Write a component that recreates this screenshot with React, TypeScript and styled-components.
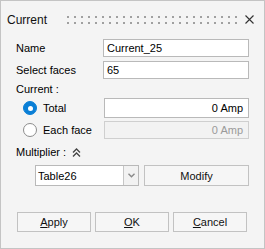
import React from 'react';
import styled, { createGlobalStyle } from 'styled-components';

/* -------------------------------------------------------------------------- */
/*                                  Globals                                   */
/* -------------------------------------------------------------------------- */

const GlobalStyle = createGlobalStyle`
  html, body {
    margin: 0;
    padding: 0;
    background: #f4f4f4;
  }
  body {
    font-family: "Liberation Sans", Arial, sans-serif;
    font-size: 11px;
    color: #000;
  }
  * { box-sizing: border-box; }
`;

/* -------------------------------------------------------------------------- */
/*                                  Component                                 */
/* -------------------------------------------------------------------------- */

const App = () => (
  <>
    <GlobalStyle />
    <Window>
      <TitleBar>
        <Title>Current</Title>
        <Grip />
        <CloseButton aria-label="Close">
          <svg width="9" height="9" viewBox="0 0 9 9">
            <path d="M0.5 0.5 L8.5 8.5 M8.5 0.5 L0.5 8.5" stroke="#333" strokeWidth="1.1" />
          </svg>
        </CloseButton>
      </TitleBar>

      <Body>
        {/* ------------------------------ fields ------------------------------ */}
        <FieldRow>
          <Label>Name</Label>
          <TextBox>Current_25</TextBox>
        </FieldRow>
        <FieldRow $top={4}>
          <Label>Select faces</Label>
          <TextBox>65</TextBox>
        </FieldRow>

        {/* ------------------------------ current ----------------------------- */}
        <SectionLabel $top={4}>Current :</SectionLabel>
        <RadioRow $top={2}>
          <Radio $checked />
          <RadioText>Total</RadioText>
          <TextBox $height={20} $align="right">0 Amp</TextBox>
        </RadioRow>
        <RadioRow $top={3}>
          <Radio />
          <RadioText>Each face</RadioText>
          <TextBox $height={18} $align="right" $disabled>0 Amp</TextBox>
        </RadioRow>

        {/* ----------------------------- multiplier --------------------------- */}
        <SectionLabel $top={7}>
          Multiplier :
          <svg width="9" height="9" viewBox="0 0 9 9">
            <path d="M1 4.5 L4.5 1 L8 4.5 M1 8.5 L4.5 5 L8 8.5" stroke="#444" strokeWidth="1.3" fill="none" />
          </svg>
        </SectionLabel>
        <ComboRow>
          <Combo>
            <ComboText>Table26</ComboText>
            <ComboArrow>
              <svg width="7" height="5" viewBox="0 0 7 5">
                <path d="M0.5 0.8 L3.5 3.8 L6.5 0.8" stroke="#8a8a8a" strokeWidth="1.4" fill="none" />
              </svg>
            </ComboArrow>
          </Combo>
          <Button $grow>Modify</Button>
        </ComboRow>

        {/* ------------------------------ actions ----------------------------- */}
        <Actions>
          <Button>
            <u>A</u>pply
          </Button>
          <Button>
            <u>O</u>K
          </Button>
          <Button>
            <u>C</u>ancel
          </Button>
        </Actions>
      </Body>
    </Window>
  </>
);

/* -------------------------------------------------------------------------- */
/*                                    STYLES                                  */
/* -------------------------------------------------------------------------- */

const Window = styled.div`
  width: 265px;
  height: 249px;
  border: 1px solid #c4c4c4;
  background: #f4f4f4;
  display: flex;
  flex-direction: column;
`;

const TitleBar = styled.div`
  height: 38px;
  display: flex;
  align-items: center;
  padding: 0 10px 0 6px;
`;

const Title = styled.span`
  font-size: 12px;
  width: 55px;
  color: #111;
`;

const Grip = styled.div`
  width: 178px;
  height: 8px;
  margin-top: -1px;
  background-image: linear-gradient(90deg, #f4f4f4 5px, transparent 5px),
    linear-gradient(#a0a0a0 2px, transparent 2px);
  background-size: 7px 6px, 7px 6px;
`;

const CloseButton = styled.div`
  margin-left: auto;
  width: 9px;
  height: 9px;
  display: flex;
  margin-top: -1px;
`;

const Body = styled.div`
  display: flex;
  flex-direction: column;
  padding: 0 15px 0 15px;
`;

const FieldRow = styled.div<{ $top?: number }>`
  display: grid;
  grid-template-columns: 87px 1fr;
  align-items: center;
  margin-top: ${(p) => p.$top ?? 0}px;
`;

const Label = styled.span`
  line-height: 13px;
`;

const TextBox = styled.div<{ $height?: number; $align?: string; $disabled?: boolean }>`
  height: ${(p) => p.$height ?? 18}px;
  border: 1px solid ${(p) => (p.$disabled ? '#cfcfcf' : '#b9b9b9')};
  background: ${(p) => (p.$disabled ? '#f2f2f2' : '#fff')};
  color: ${(p) => (p.$disabled ? '#9a9a9a' : '#000')};
  display: flex;
  align-items: center;
  justify-content: ${(p) => (p.$align === 'right' ? 'flex-end' : 'flex-start')};
  padding: 0 5px 0 3px;
  font-size: 11px;
`;

const SectionLabel = styled.div<{ $top?: number }>`
  display: flex;
  align-items: center;
  gap: 6px;
  line-height: 13px;
  margin-top: ${(p) => p.$top ?? 0}px;
`;

const RadioRow = styled.div<{ $top?: number }>`
  display: grid;
  grid-template-columns: 14px 55px 1fr;
  column-gap: 6px;
  align-items: center;
  padding-left: 7px;
  margin-top: ${(p) => p.$top ?? 0}px;
`;

const Radio = styled.span<{ $checked?: boolean }>`
  width: 14px;
  height: 14px;
  border-radius: 50%;
  background: ${(p) => (p.$checked ? '#0a7fd6' : '#fff')};
  border: 1px solid ${(p) => (p.$checked ? '#0a7fd6' : '#8c8c8c')};
  display: flex;
  align-items: center;
  justify-content: center;

  &::after {
    content: '';
    width: 5px;
    height: 5px;
    border-radius: 50%;
    background: #fff;
    display: ${(p) => (p.$checked ? 'block' : 'none')};
  }
`;

const RadioText = styled.span`
  font-size: 11px;
`;

const ComboRow = styled.div`
  display: flex;
  gap: 5px;
  margin-top: 6px;
  padding-left: 19px;
  height: 21px;
`;

const Combo = styled.div`
  width: 104px;
  display: flex;
  border: 1px solid #b9b9b9;
  background: #fff;
`;

const ComboText = styled.div`
  flex: 1;
  display: flex;
  align-items: center;
  padding-left: 2px;
  font-size: 11px;
  border-right: 1px solid #c6c6c6;
`;

const ComboArrow = styled.div`
  width: 14px;
  background: #f2f2f2;
  display: flex;
  align-items: center;
  justify-content: center;
`;

const Button = styled.div<{ $grow?: boolean }>`
  ${(p) => (p.$grow ? 'flex: 1;' : 'width: 74px;')}
  height: ${(p) => (p.$grow ? 21 : 20)}px;
  border: 1px solid #c2c2c2;
  background: #f6f6f6;
  display: flex;
  align-items: center;
  justify-content: center;
  font-size: 11px;
  color: #111;

  u {
    text-underline-offset: 1px;
  }
`;

const Actions = styled.div`
  display: flex;
  gap: 4px;
  margin-top: 26px;
  padding-left: 1px;
`;

export default App;
